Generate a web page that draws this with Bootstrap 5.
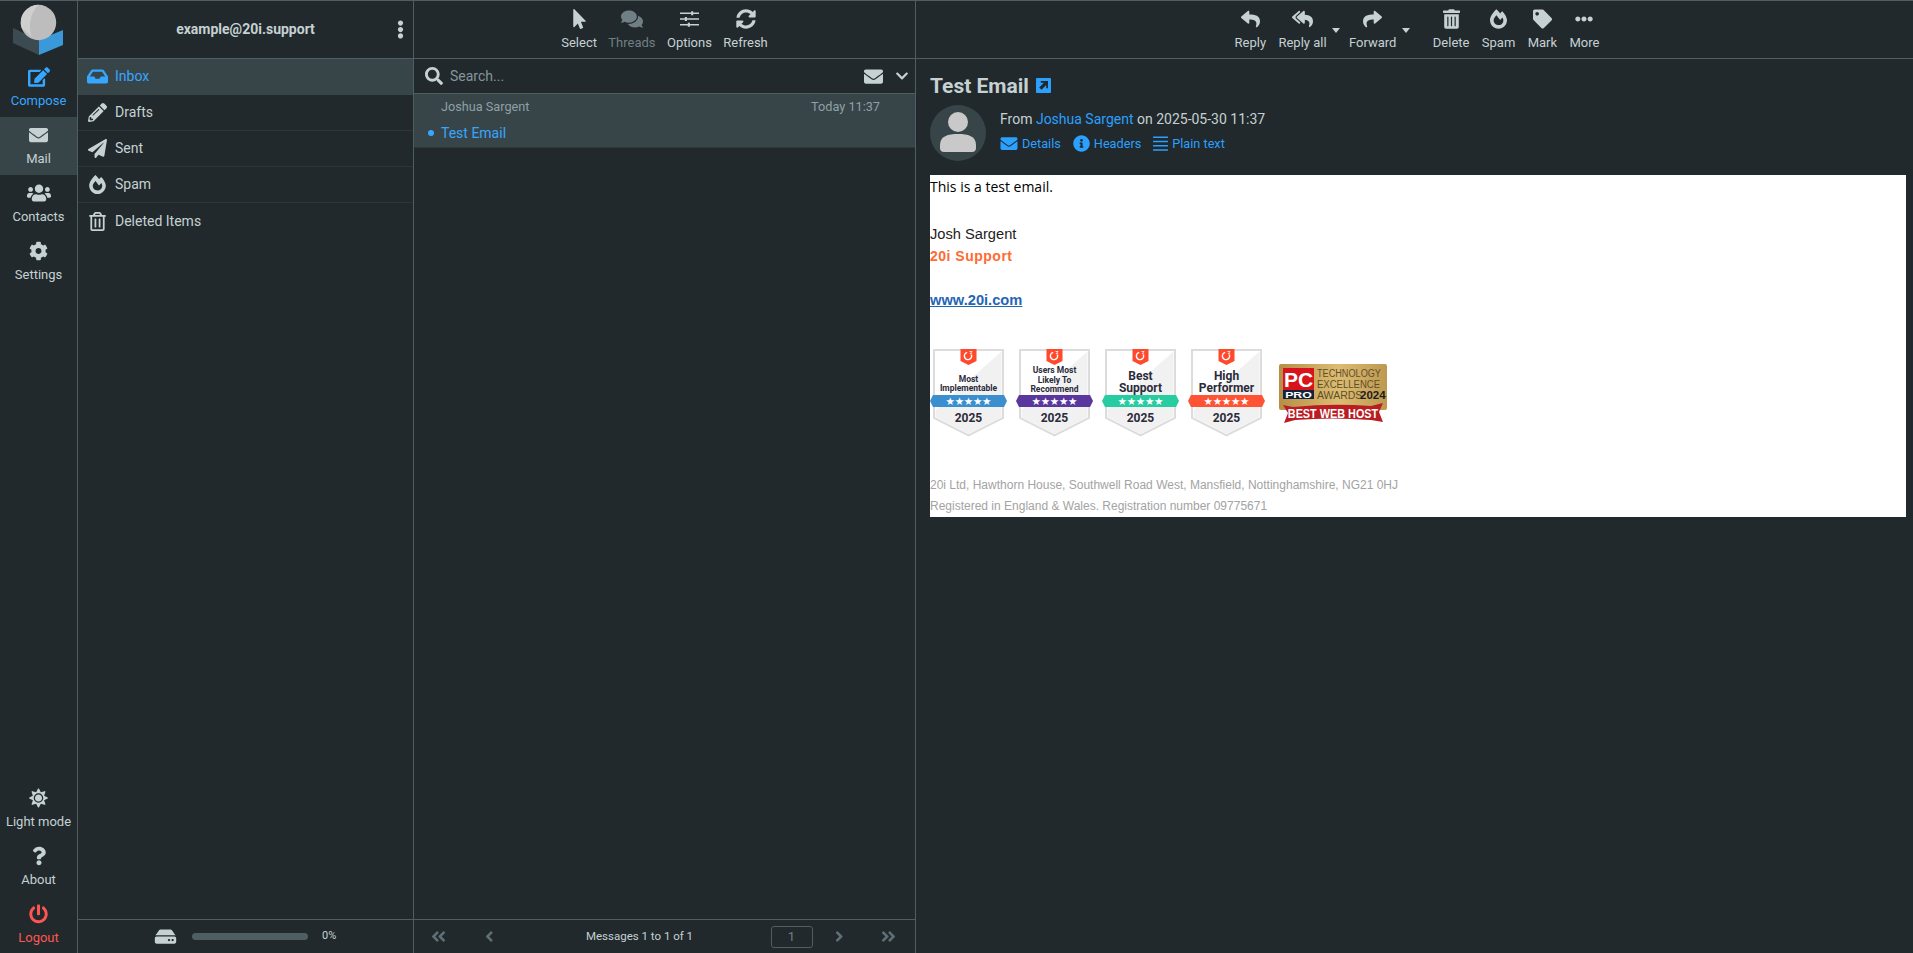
<!DOCTYPE html>
<html lang="en">
<head>
<meta charset="utf-8">
<title>Roundcube Webmail :: Test Email</title>
<link href="https://cdn.jsdelivr.net/npm/bootstrap@5.3.0/dist/css/bootstrap.min.css" rel="stylesheet">
<style>
html,body{height:100%;}
body{background:#21292c;color:#c5d1d3;font-family:Roboto,"Liberation Sans",sans-serif;font-size:14px;overflow:hidden;}
.shell{height:953px;border-top:1px solid #4f5e63;}
svg{fill:currentColor;display:block;flex:none;}
.rail{width:78px;border-right:1px solid #4f5e63;}
.logo-box{height:58px;}
.logo-svg{width:77px;height:58px;}
.rail-item{height:58px;padding-top:3px;font-size:13px;color:#c5d1d3;text-decoration:none;}
.rail-item.hi{padding-top:1px;}
.rail-item svg{height:20px;margin-bottom:4px;}
.rail-item.on{background:#374549;}
.rail-item.blue{color:#37a6ff;}
.rail-item.red{color:#ff5552;}
.w-compose{width:22px;}.w-mail{width:19px;}.w-users{width:24px;}.w-gear{width:19px;}.w-sun{width:19px;}.w-q{width:14px;}.w-power{width:19px;}
.folders{width:336px;border-right:1px solid #4f5e63;}
.list-col{width:502px;border-right:1px solid #4f5e63;}
.headbar{height:58px;border-bottom:1px solid #4f5e63;flex:none;}
.acct{font-weight:700;font-size:14px;position:relative;}
.dots{position:absolute;right:9px;top:19px;width:7px;height:19px;}
.fold{height:36px;padding:0 0 0 9px;border:0;border-bottom:1px solid #2d373b;background:transparent;color:#c5d1d3;font-size:14px;gap:7px;}
.fold.on{background:#374549;color:#37a6ff;border-bottom-color:#374549;}
.fold .fi{width:21px;height:19px;}
.quota{height:34px;border-top:1px solid #4f5e63;font-size:11px;padding-left:76px;}
.hdd{width:23px;height:19px;margin-right:15px;}
.bar-track{width:116px;height:7px;border-radius:4px;background:#4f5e63;margin-right:14px;}
.tool{padding:0 5.7px;font-size:13px;color:#c5d1d3;line-height:16px;white-space:nowrap;}
.tool svg{height:20px;margin-bottom:6px;}
.tool.off{color:#6f7f84;}
.msgbar{padding-left:5px;}
.msgbar .tool{padding:0 6.2px;}
.tw-sel{width:13px;}.tw-com{width:22px;}.tw-opt{width:19px;}.tw-ref{width:20px;}
.tw-rep{width:19px;}.tw-all{width:21px;}.tw-del{width:17px;}.tw-spam{width:17px;}.tw-tag{width:19px;}.tw-more{width:18px;}
.caret-a,.caret-b{position:relative;}
.caret-a{margin-right:10px;}
.caret-b{margin-right:24px;}
.caret-a::after,.caret-b::after{content:"";position:absolute;right:-7px;top:19px;border-left:4.5px solid transparent;border-right:4.5px solid transparent;border-top:5px solid #c5d1d3;}
.search{height:35px;border-bottom:1px solid #4f5e63;padding:0 6px 0 11px;flex:none;}
.search .mag{width:18px;height:18px;margin-right:7px;}
.search span{color:#85969c;font-size:14px;}
.env{width:19px;height:19px;margin-right:12px;}
.chev{width:14px;height:14px;}
.msg{height:54px;background:#374549;border-bottom:1px solid #2d373b;flex:none;padding:0 35px 0 27px;position:relative;}
.msg-top{height:26px;font-size:12.7px;color:#8fa0a6;}
.msg-sub{height:26px;font-size:14px;color:#37a6ff;}
.dot{position:absolute;left:14px;top:36px;width:6px;height:6px;border-radius:50%;background:#37a6ff;}
.pager{height:34px;border-top:1px solid #4f5e63;flex:none;font-size:11.5px;padding:0 0 0 17px;}
.pg-i{color:#5f6f75;height:17px;}
.pg-d{width:15px;}.pg-s{width:8.500px;}
.pg-text{width:246px;margin-left:23px;text-align:center;}
.pg-input{width:42px;height:22px;margin-left:8px;border:1px solid #4f5e63;border-radius:3px;color:#6f7f84;line-height:20px;text-align:center;font-size:13px;}
.l1{margin-left:39px;}.r1{margin-left:22px;}.r2{margin-left:38px;}
.viewer{padding:0 7px 0 14px;}
.subj{font-size:21px;font-weight:700;line-height:24px;margin-top:10px;height:36px;padding-bottom:3px;gap:7px;}
.ext{width:15px;height:15px;color:#2ba0ff;}
.meta{height:56px;gap:14px;margin-bottom:14px;}
.avatar{width:56px;height:56px;}
.from{line-height:16px;margin-top:6px;font-size:14px;}
.from a,.lnks a{color:#2ba0ff;text-decoration:none;}
.lnks{margin-top:8px;font-size:12.7px;gap:12px;line-height:16px;}
.lnks a{gap:4px;}
.lnks svg{height:17px;}
.l-env{width:18px;}.l-inf{width:17px;}.l-bar{width:15px;}
.mail-body{background:#fff;color:#000;height:342px;font-family:"Liberation Sans",Arial,sans-serif;font-size:14.67px;line-height:22px;}
.m-line{height:22px;white-space:nowrap;}
.m-first{font-family:"Open Sans",sans-serif;font-size:14px;margin-top:0;padding-top:1px;height:26px;line-height:22px;}
.m-gap1{margin-top:22px;color:#222;}
.m-brand{color:#ff6a33;font-weight:700;font-size:14px;letter-spacing:.5px;}
.m-link{margin-top:22px;color:#1f66b5;font-weight:700;font-size:14.67px;text-decoration:underline;}
.badges{margin-top:38px;height:90px;}
.g2{width:86px;height:90px;}
.g2 text{font-family:Roboto,"Liberation Sans",sans-serif;font-weight:700;text-anchor:middle;fill:#2b2b3a;}
.g2 .st{fill:#fff;font-weight:400;font-family:"DejaVu Sans",sans-serif;font-size:10.500px;}
.g2 .yr{font-size:12px;}
.g2 .big{font-size:12px;}
.g2 .sm{font-size:8.500px;}
.pcpro{width:110px;height:60px;margin:15px 0 0 5px;}
.pcpro text{font-family:"Liberation Sans",sans-serif;}
.legal{color:#a3a3a3;font-size:12px;line-height:21px;}
.legal-top{margin-top:36px;}
.symbols{width:0;height:0;position:absolute;}
</style>
</head>
<body>
<svg class="symbols" aria-hidden="true">
<symbol id="mail" viewBox="0 0 512 512"><path d="M502.3 190.8c3.9-3.1 9.7-.2 9.7 4.7V400c0 26.5-21.5 48-48 48H48c-26.5 0-48-21.5-48-48V195.6c0-5 5.7-7.8 9.7-4.7 22.4 17.4 52.1 39.5 154.1 113.6 21.1 15.4 56.7 47.8 92.2 47.6 35.7.3 72-32.8 92.3-47.6 102-74.1 131.6-96.3 154-113.7zM256 320c23.2.4 56.6-29.2 73.4-41.4 132.7-96.3 142.8-104.7 173.4-128.7 5.8-4.5 9.2-11.5 9.2-18.9v-19c0-26.5-21.5-48-48-48H48C21.5 64 0 85.5 0 112v19c0 7.4 3.4 14.3 9.2 18.9 30.6 23.9 40.7 32.4 173.4 128.7 16.8 12.2 50.2 41.8 73.4 41.4z"/></symbol>
<symbol id="edit" viewBox="0 0 576 512"><path d="M402.6 83.2l90.2 90.2c3.8 3.8 3.8 10 0 13.8L274.4 405.6l-92.8 10.3c-12.4 1.4-22.9-9.1-21.5-21.5l10.3-92.8L388.8 83.2c3.8-3.8 10-3.8 13.8 0zm162-22.9l-48.8-48.8c-15.2-15.2-39.9-15.2-55.2 0l-35.4 35.4c-3.8 3.8-3.8 10 0 13.8l90.2 90.2c3.8 3.8 10 3.8 13.8 0l35.4-35.4c15.2-15.3 15.2-40 0-55.2zM384 346.2V448H64V128h229.8c3.2 0 6.2-1.3 8.5-3.5l40-40c7.6-7.6 2.2-20.5-8.5-20.5H48C21.5 64 0 85.5 0 112v352c0 26.5 21.5 48 48 48h352c26.5 0 48-21.5 48-48V306.2c0-10.7-12.9-16-20.5-8.5l-40 40c-2.2 2.3-3.5 5.3-3.5 8.5z"/></symbol>
<symbol id="users" viewBox="0 0 640 512"><path d="M96 224c35.3 0 64-28.7 64-64s-28.7-64-64-64-64 28.7-64 64 28.7 64 64 64zm448 0c35.3 0 64-28.7 64-64s-28.7-64-64-64-64 28.7-64 64 28.7 64 64 64zm32 32h-64c-17.6 0-33.5 7.1-45.1 18.6 40.3 22.1 68.9 62 75.1 109.4h66c17.7 0 32-14.3 32-32v-32c0-35.3-28.7-64-64-64zm-256 0c61.9 0 112-50.1 112-112S381.9 32 320 32 208 82.1 208 144s50.1 112 112 112zm76.8 32h-8.3c-20.8 10-43.9 16-68.5 16s-47.6-6-68.5-16h-8.3C179.6 288 128 339.6 128 403.2V432c0 26.5 21.5 48 48 48h288c26.5 0 48-21.5 48-48v-28.8c0-63.6-51.6-115.2-115.2-115.2zm-223.7-13.4C161.5 263.1 145.6 256 128 256H64c-35.3 0-64 28.7-64 64v32c0 17.7 14.3 32 32 32h65.9c6.3-47.4 34.9-87.3 75.2-109.4z"/></symbol>
<symbol id="cog" viewBox="0 0 512 512"><path d="M487.4 315.7l-42.6-24.6c4.3-23.2 4.3-47 0-70.2l42.6-24.6c4.9-2.8 7.1-8.6 5.5-14-11.1-35.6-30-67.8-54.7-94.6-3.8-4.1-10-5.1-14.8-2.3L380.8 110c-17.9-15.4-38.5-27.3-60.8-35.1V25.8c0-5.6-3.9-10.5-9.4-11.7-36.7-8.2-74.3-7.8-109.2 0-5.5 1.2-9.4 6.1-9.4 11.7V75c-22.2 7.9-42.8 19.8-60.8 35.1L88.7 85.5c-4.9-2.8-11-1.9-14.8 2.3-24.7 26.7-43.6 58.9-54.7 94.6-1.7 5.4.6 11.2 5.5 14L67.3 221c-4.3 23.2-4.3 47 0 70.2l-42.6 24.6c-4.9 2.8-7.1 8.6-5.5 14 11.1 35.6 30 67.8 54.7 94.6 3.8 4.1 10 5.1 14.8 2.3l42.6-24.6c17.9 15.4 38.5 27.3 60.8 35.1v49.2c0 5.6 3.9 10.5 9.4 11.7 36.7 8.2 74.3 7.8 109.2 0 5.5-1.2 9.4-6.1 9.4-11.7v-49.2c22.2-7.9 42.8-19.8 60.8-35.1l42.6 24.6c4.9 2.8 11 1.9 14.8-2.3 24.7-26.7 43.6-58.9 54.7-94.6 1.5-5.5-.7-11.3-5.6-14.1zM256 336c-44.1 0-80-35.9-80-80s35.9-80 80-80 80 35.9 80 80-35.9 80-80 80z"/></symbol>
<symbol id="sun" viewBox="0 0 512 512"><path d="M256 160c-52.9 0-96 43.1-96 96s43.1 96 96 96 96-43.1 96-96-43.1-96-96-96zm246.4 80.5l-94.7-47.3 33.5-100.4c4.5-13.6-8.4-26.5-21.9-21.9l-100.4 33.5-47.4-94.8c-6.4-12.8-24.6-12.8-31 0l-47.3 94.7L92.7 70.8c-13.6-4.5-26.5 8.4-21.9 21.9l33.5 100.4-94.7 47.4c-12.8 6.4-12.8 24.6 0 31l94.7 47.3-33.5 100.5c-4.5 13.6 8.4 26.5 21.9 21.9l100.4-33.5 47.3 94.7c6.4 12.8 24.6 12.8 31 0l47.3-94.7 100.4 33.5c13.6 4.5 26.5-8.4 21.9-21.9l-33.5-100.4 94.7-47.3c13-6.5 13-24.7.2-31.1zm-155.9 106c-49.9 49.9-131.1 49.9-181 0-49.9-49.9-49.9-131.1 0-181 49.9-49.9 131.1-49.9 181 0 49.9 49.9 49.9 131.1 0 181z"/></symbol>
<symbol id="quest" viewBox="0 0 384 512"><path d="M202.021 0C122.202 0 70.503 32.703 29.914 91.026c-7.363 10.58-5.093 25.086 5.178 32.874l43.138 32.709c10.373 7.865 25.132 6.026 33.253-4.148 25.049-31.381 43.63-49.449 82.757-49.449 30.764 0 68.816 19.799 68.816 49.631 0 22.552-18.617 34.134-48.993 51.164-35.423 19.86-82.299 44.576-82.299 106.405V320c0 13.255 10.745 24 24 24h72.471c13.255 0 24-10.745 24-24v-5.773c0-42.86 125.268-44.645 125.268-160.627C377.504 66.256 286.902 0 202.021 0zM192 373.459c-38.196 0-69.271 31.075-69.271 69.271 0 38.195 31.075 69.27 69.271 69.27s69.271-31.075 69.271-69.271-31.075-69.27-69.271-69.27z"/></symbol>
<symbol id="power" viewBox="0 0 512 512"><path d="M400 54.1c63 45 104 118.6 104 201.9 0 136.8-110.8 247.7-247.5 248C120 504.3 8.2 393 8 256.4 7.9 173.1 48.9 99.3 111.8 54.2c11.7-8.3 28-4.8 35 7.7L162.6 90c5.9 10.5 3.1 23.8-6.6 31-41.5 30.8-68 79.6-68 134.9-.1 92.3 74.5 168.1 168 168.1 91.6 0 168.6-74.2 168-169.1-.3-51.8-24.7-101.8-68.1-134-9.7-7.2-12.4-20.5-6.5-30.9l15.8-28.1c7-12.4 23.2-16.1 34.8-7.8zM296 264V24c0-13.3-10.7-24-24-24h-32c-13.3 0-24 10.7-24 24v240c0 13.3 10.7 24 24 24h32c13.3 0 24-10.7 24-24z"/></symbol>
<symbol id="inbox" viewBox="0 0 576 512"><path d="M567.938 243.908L462.25 85.374A48.003 48.003 0 0 0 422.311 64H153.689a48 48 0 0 0-39.938 21.374L8.062 243.908A47.994 47.994 0 0 0 0 270.533V400c0 26.51 21.49 48 48 48h480c26.51 0 48-21.49 48-48V270.533a47.994 47.994 0 0 0-8.062-26.625zM162.252 128h251.497l85.333 128H376l-32 64H232l-32-64H76.918l85.334-128z"/></symbol>
<symbol id="pencil" viewBox="0 0 512 512"><path d="M497.9 142.1l-46.1 46.1c-4.7 4.7-12.3 4.7-17 0l-111-111c-4.7-4.7-4.7-12.3 0-17l46.1-46.1c18.7-18.7 49.1-18.7 67.9 0l60.1 60.1c18.8 18.7 18.8 49.1 0 67.9zM284.2 99.8L21.6 362.4.4 483.9c-2.9 16.4 11.4 30.6 27.8 27.8l121.5-21.3 262.6-262.6c4.7-4.7 4.7-12.3 0-17l-111-111c-4.8-4.7-12.4-4.7-17.1 0zM124.1 339.9c-5.5-5.5-5.5-14.3 0-19.8l154-154c5.5-5.5 14.3-5.5 19.8 0s5.5 14.3 0 19.8l-154 154c-5.5 5.5-14.3 5.5-19.8 0zM88 424h48v36.3l-64.5 11.3-31.1-31.1L51.7 376H88v48z"/></symbol>
<symbol id="plane" viewBox="0 0 512 512"><path d="M476 3.2L12.5 270.6c-18.1 10.4-15.8 35.6 2.2 43.2L121 358.4l287.3-253.2c5.5-4.9 13.3 2.6 8.6 8.3L176 407v80.5c0 23.6 28.5 32.9 42.5 15.8L282 426l124.6 52.2c14.2 6 30.4-2.9 33-18.2l72-432C515 7.8 493.3-6.8 476 3.2z"/></symbol>
<symbol id="fire" viewBox="0 0 448 512"><path d="M323.56 51.2c-20.8 19.3-39.58 39.59-56.22 59.97C240.08 73.62 206.28 35.53 168 0 69.74 91.17 0 209.96 0 281.6 0 408.85 100.29 512 224 512s224-103.15 224-230.4c0-53.27-51.98-163.14-124.44-230.4zm-19.47 340.65C282.43 407.01 255.72 416 226.86 416 154.71 416 96 368.26 96 290.75c0-38.61 24.31-72.63 72.79-130.75 6.93 7.98 98.83 125.34 98.83 125.34l58.63-66.88c4.14 6.85 7.91 13.55 11.27 19.97 27.35 52.19 15.81 118.97-33.43 153.42z"/></symbol>
<symbol id="trasho" viewBox="0 0 448 512"><path d="M268 416h24a12 12 0 0 0 12-12V188a12 12 0 0 0-12-12h-24a12 12 0 0 0-12 12v216a12 12 0 0 0 12 12zM432 80h-82.41l-34-56.7A48 48 0 0 0 274.41 0H173.59a48 48 0 0 0-41.16 23.3L98.41 80H16A16 16 0 0 0 0 96v16a16 16 0 0 0 16 16h16v336a48 48 0 0 0 48 48h288a48 48 0 0 0 48-48V128h16a16 16 0 0 0 16-16V96a16 16 0 0 0-16-16zM171.84 50.91A6 6 0 0 1 177 48h94a6 6 0 0 1 5.15 2.91L293.61 80H154.39zM368 464H80V128h288zm-212-48h24a12 12 0 0 0 12-12V188a12 12 0 0 0-12-12h-24a12 12 0 0 0-12 12v216a12 12 0 0 0 12 12z"/></symbol>
<symbol id="trash" viewBox="0 0 448 512"><path d="M32 464a48 48 0 0 0 48 48h288a48 48 0 0 0 48-48V128H32zm272-256a16 16 0 0 1 32 0v224a16 16 0 0 1-32 0zm-96 0a16 16 0 0 1 32 0v224a16 16 0 0 1-32 0zm-96 0a16 16 0 0 1 32 0v224a16 16 0 0 1-32 0zM432 32H312l-9.4-18.7A24 24 0 0 0 281.1 0H166.8a23.72 23.72 0 0 0-21.4 13.3L136 32H16A16 16 0 0 0 0 48v32a16 16 0 0 0 16 16h416a16 16 0 0 0 16-16V48a16 16 0 0 0-16-16z"/></symbol>
<symbol id="vdots" viewBox="0 0 192 512"><path d="M96 184c39.8 0 72 32.2 72 72s-32.2 72-72 72-72-32.2-72-72 32.2-72 72-72zM24 80c0 39.8 32.2 72 72 72s72-32.2 72-72S135.8 8 96 8 24 40.2 24 80zm0 352c0 39.8 32.2 72 72 72s72-32.2 72-72-32.2-72-72-72-72 32.2-72 72z"/></symbol>
<symbol id="hdots" viewBox="0 0 512 512"><path d="M328 256c0 39.8-32.2 72-72 72s-72-32.2-72-72 32.2-72 72-72 72 32.2 72 72zm104-72c-39.8 0-72 32.2-72 72s32.2 72 72 72 72-32.2 72-72-32.2-72-72-72zm-352 0c-39.8 0-72 32.2-72 72s32.2 72 72 72 72-32.2 72-72-32.2-72-72-72z"/></symbol>
<symbol id="pointer" viewBox="0 0 320 512"><path d="M302.189 329.126H196.105l55.831 135.993c3.889 9.428-.555 19.999-9.444 23.999l-49.165 21.427c-9.165 4-19.443-.571-23.332-9.714l-53.053-129.136-86.664 89.138C18.729 472.71 0 463.554 0 447.977V18.299C0 1.899 19.921-6.096 30.277 5.443l284.412 292.542c11.472 11.179 3.007 31.141-12.5 31.141z"/></symbol>
<symbol id="comments" viewBox="0 0 576 512"><path d="M416 192c0-88.4-93.1-160-208-160S0 103.6 0 192c0 34.3 14.1 65.9 38 92-13.4 30.2-35.5 54.2-35.8 54.5-2.2 2.3-2.8 5.7-1.5 8.7S4.8 352 8 352c36.6 0 66.9-12.3 88.7-25 32.2 15.7 70.3 25 111.3 25 114.9 0 208-71.6 208-160zm122 220c23.9-26 38-57.7 38-92 0-66.9-53.5-124.2-129.3-148.1.9 6.6 1.3 13.3 1.3 20.1 0 105.9-107.7 192-240 192-10.8 0-21.3-.8-31.7-1.9C207.8 439.6 281.8 480 368 480c41 0 79.1-9.2 111.3-25 21.8 12.7 52.1 25 88.7 25 3.2 0 6.1-1.9 7.3-4.8 1.3-2.9.7-6.3-1.5-8.7-.3-.3-22.4-24.2-35.8-54.5z"/></symbol>
<symbol id="sliders" viewBox="0 0 512 512"><path d="M0 78h512v44H0zM0 234h512v44H0zM0 390h512v44H0zM300 44h56v112h-56zM130 200h56v112h-56zM210 356h56v112h-56z"/></symbol>
<symbol id="sync" viewBox="0 0 512 512"><path d="M370.72 133.28C339.458 104.008 298.888 87.962 255.848 88c-77.458.068-144.328 53.178-162.791 126.85-1.344 5.363-6.122 9.15-11.651 9.15H24.103c-7.498 0-13.194-6.807-11.807-14.176C33.933 94.924 134.813 8 256 8c66.448 0 126.791 26.136 171.315 68.685L463.03 40.97C478.149 25.851 504 36.559 504 57.941V192c0 13.255-10.745 24-24 24H345.941c-21.382 0-32.09-25.851-16.971-40.971l41.75-41.749zM32 296h134.059c21.382 0 32.09 25.851 16.971 40.971l-41.75 41.75c31.262 29.273 71.835 45.319 114.876 45.28 77.418-.07 144.315-53.144 162.787-126.849 1.344-5.363 6.122-9.15 11.651-9.15h57.304c7.498 0 13.194 6.807 11.807 14.176C478.067 417.076 377.187 504 256 504c-66.448 0-126.791-26.136-171.315-68.685L48.97 471.03C33.851 486.149 8 475.441 8 454.059V320c0-13.255 10.745-24 24-24z"/></symbol>
<symbol id="reply" viewBox="0 0 512 512"><path d="M8.309 189.836L184.313 37.851C199.719 24.546 224 35.347 224 56.015v80.053c160.629 1.839 288 34.032 288 186.258 0 61.441-39.581 122.309-83.333 154.132-13.653 9.931-33.111-2.533-28.077-18.631 45.344-145.012-21.507-183.51-176.59-185.742V360c0 20.7-24.3 31.453-39.687 18.164l-176.004-152c-11.071-9.562-11.086-26.753 0-36.328z"/></symbol>
<symbol id="replyall" viewBox="0 0 576 512"><path d="M136.309 189.836L312.313 37.851C327.72 24.546 352 35.348 352 56.015v82.763c129.182 10.231 224 52.212 224 183.548 0 61.441-39.582 122.309-83.333 154.132-13.653 9.931-33.111-2.533-28.077-18.631 38.512-123.162-3.922-169.482-112.59-182.015v84.175c0 20.701-24.3 31.453-39.687 18.164L136.309 226.164c-11.071-9.561-11.086-26.753 0-36.328zm-128 36.328L184.313 378.15C199.7 391.439 224 380.687 224 359.986v-15.818l-108.606-93.785A55.96 55.96 0 0 1 96 207.998a55.953 55.953 0 0 1 19.393-42.38L224 71.832V56.015c0-20.667-24.28-31.469-39.687-18.164L8.309 189.836c-11.086 9.575-11.071 26.767 0 36.328z"/></symbol>
<symbol id="share" viewBox="0 0 512 512"><path d="M503.691 189.836L327.687 37.851C312.281 24.546 288 35.347 288 56.015v80.053C127.371 137.907 0 170.1 0 322.326c0 61.441 39.581 122.309 83.333 154.132 13.653 9.931 33.111-2.533 28.077-18.631C66.066 312.814 132.917 274.316 288 272.085V360c0 20.7 24.3 31.453 39.687 18.164l176.004-152c11.071-9.562 11.086-26.753 0-36.328z"/></symbol>
<symbol id="tag" viewBox="0 0 512 512"><path d="M0 252.118V48C0 21.49 21.49 0 48 0h204.118a48 48 0 0 1 33.941 14.059l211.882 211.882c18.745 18.745 18.745 49.137 0 67.882L293.823 497.941c-18.745 18.745-49.137 18.745-67.882 0L14.059 286.059A48 48 0 0 1 0 252.118zM112 64c-26.51 0-48 21.49-48 48s21.49 48 48 48 48-21.49 48-48-21.49-48-48-48z"/></symbol>
<symbol id="search" viewBox="0 0 512 512"><path d="M505 442.7L405.3 343c-4.5-4.5-10.6-7-17-7H372c27.6-35.3 44-79.7 44-128C416 93.1 322.9 0 208 0S0 93.1 0 208s93.1 208 208 208c48.3 0 92.7-16.4 128-44v16.3c0 6.4 2.5 12.5 7 17l99.7 99.7c9.4 9.4 24.6 9.4 33.9 0l28.3-28.3c9.4-9.4 9.4-24.6.1-34zM208 336c-70.7 0-128-57.2-128-128 0-70.7 57.2-128 128-128 70.7 0 128 57.2 128 128 0 70.7-57.2 128-128 128z"/></symbol>
<symbol id="chev" viewBox="0 0 448 512"><path d="M207.029 381.476L12.686 187.132c-9.373-9.373-9.373-24.569 0-33.941l22.667-22.667c9.357-9.357 24.522-9.375 33.901-.04L224 284.505l154.745-154.021c9.379-9.335 24.544-9.317 33.901.04l22.667 22.667c9.373 9.373 9.373 24.569 0 33.941L240.971 381.476c-9.373 9.372-24.569 9.372-33.942 0z"/></symbol>
<symbol id="dleft" viewBox="0 0 448 512"><path d="M223.7 239l136-136c9.4-9.4 24.6-9.4 33.9 0l22.6 22.6c9.4 9.4 9.4 24.6 0 33.9L319.9 256l96.4 96.4c9.4 9.4 9.4 24.6 0 33.9L393.7 409c-9.4 9.4-24.6 9.4-33.9 0l-136-136c-9.5-9.4-9.5-24.6-.1-34zm-192 34l136 136c9.4 9.4 24.6 9.4 33.9 0l22.6-22.6c9.4-9.4 9.4-24.6 0-33.9L127.9 256l96.4-96.4c9.4-9.4 9.4-24.6 0-33.9L201.7 103c-9.4-9.4-24.6-9.4-33.9 0l-136 136c-9.5 9.4-9.5 24.6-.1 34z"/></symbol>
<symbol id="left" viewBox="0 0 256 512"><path d="M31.7 239l136-136c9.4-9.4 24.6-9.4 33.9 0l22.6 22.6c9.4 9.4 9.4 24.6 0 33.9L127.9 256l96.4 96.4c9.4 9.4 9.4 24.6 0 33.9L201.7 409c-9.4 9.4-24.6 9.4-33.9 0l-136-136c-9.5-9.4-9.5-24.6-.1-34z"/></symbol>
<symbol id="right" viewBox="0 0 256 512"><path d="M224.3 273l-136 136c-9.4 9.4-24.6 9.4-33.9 0l-22.6-22.6c-9.4-9.4-9.4-24.6 0-33.9l96.4-96.4-96.4-96.4c-9.4-9.4-9.4-24.6 0-33.9L54.3 103c9.4-9.4 24.6-9.4 33.9 0l136 136c9.5 9.4 9.5 24.6.1 34z"/></symbol>
<symbol id="dright" viewBox="0 0 448 512"><path d="M224.3 273l-136 136c-9.4 9.4-24.6 9.4-33.9 0l-22.6-22.6c-9.4-9.4-9.4-24.6 0-33.9l96.4-96.4-96.4-96.4c-9.4-9.4-9.4-24.6 0-33.9L54.3 103c9.4-9.4 24.6-9.4 33.9 0l136 136c9.5 9.4 9.5 24.6.1 34zm192-34l-136-136c-9.4-9.4-24.6-9.4-33.9 0l-22.6 22.6c-9.4 9.4-9.4 24.6 0 33.9l96.4 96.4-96.4 96.4c-9.4 9.4-9.4 24.6 0 33.9l22.6 22.6c9.4 9.4 24.6 9.4 33.9 0l136-136c9.4-9.2 9.4-24.4 0-33.8z"/></symbol>
<symbol id="info" viewBox="0 0 512 512"><path d="M256 8C119.043 8 8 119.083 8 256c0 136.997 111.043 248 248 248s248-111.003 248-248C504 119.083 392.957 8 256 8zm0 110c23.196 0 42 18.804 42 42s-18.804 42-42 42-42-18.804-42-42 18.804-42 42-42zm56 254c0 6.627-5.373 12-12 12h-88c-6.627 0-12-5.373-12-12v-24c0-6.627 5.373-12 12-12h12v-64h-12c-6.627 0-12-5.373-12-12v-24c0-6.627 5.373-12 12-12h64c6.627 0 12 5.373 12 12v100h12c6.627 0 12 5.373 12 12v24z"/></symbol>
<symbol id="lines" viewBox="0 0 448 512"><path d="M0 44h448v50H0zM0 172h448v50H0zM0 300h448v50H0zM0 428h448v50H0z"/></symbol>
<symbol id="ext" viewBox="0 0 448 448"><path d="M32 0h384c18 0 32 14 32 32v384c0 18-14 32-32 32H32c-18 0-32-14-32-32V32C0 14 14 0 32 0zm110 90v52h94L96 282l70 70 140-140v94h52V90z"/></symbol>
<symbol id="hdd" viewBox="0 0 576 512"><path d="M576 304v96c0 26.51-21.49 48-48 48H48c-26.51 0-48-21.49-48-48v-96c0-26.51 21.49-48 48-48h480c26.51 0 48 21.49 48 48zm-48-80a79.557 79.557 0 0 1 30.777 6.165L462.25 85.374A48.003 48.003 0 0 0 422.311 64H153.689a48 48 0 0 0-39.938 21.374L17.223 230.165A79.557 79.557 0 0 1 48 224h480zm-48 96c-17.673 0-32 14.327-32 32s14.327 32 32 32 32-14.327 32-32-14.327-32-32-32zm-96 0c-17.673 0-32 14.327-32 32s14.327 32 32 32 32-14.327 32-32-14.327-32-32-32z"/></symbol>
<symbol id="badge" viewBox="0 0 86 90">
  <path d="M4 1H73V69L38.500 86.500 4 69Z" fill="#fff" stroke="#dcdcdc" stroke-width="2"/>
  <path d="M71.500 2.500V68L38.500 85 5.500 68V61Z" fill="#f1f1f1"/>
  <path d="M30.500 0H46.500V12L38.500 16 30.500 12Z" fill="#ff492c"/>
  <circle cx="38" cy="7" r="3.600" fill="none" stroke="#fff" stroke-width="1.500" stroke-dasharray="17 6" transform="rotate(-20 38 7)"/>
  <path d="M39.500 2.500h2.500l-1.800 2.300h2" fill="none" stroke="#fff" stroke-width=".8"/>
</symbol>
</svg>

<div class="shell d-flex">
  <nav class="rail d-flex flex-column flex-shrink-0">
    <div class="logo-box">
      <svg class="logo-svg" viewBox="0 0 77 58">
        <path d="M13 27 39 39V54L13 42Z" fill="#3c4b52"/>
        <path d="M39 39 63 29V44L39 54Z" fill="#3a9ad9"/>
        <circle cx="38.500" cy="21.500" r="17.700" fill="#bdbdbd"/>
        <path d="M38.500 3.800a17.700 17.700 0 0 0-17 23l10 9c-3-10-2-23 7-32z" fill="#cfcfcf"/>
      </svg>
    </div>
    <a class="rail-item hi blue d-flex flex-column align-items-center justify-content-center" href="#"><svg class="w-compose"><use href="#edit"/></svg>Compose</a>
    <a class="rail-item hi on d-flex flex-column align-items-center justify-content-center" href="#"><svg class="w-mail"><use href="#mail"/></svg>Mail</a>
    <a class="rail-item hi d-flex flex-column align-items-center justify-content-center" href="#"><svg class="w-users"><use href="#users"/></svg>Contacts</a>
    <a class="rail-item hi d-flex flex-column align-items-center justify-content-center" href="#"><svg class="w-gear"><use href="#cog"/></svg>Settings</a>
    <div class="flex-grow-1"></div>
    <a class="rail-item d-flex flex-column align-items-center justify-content-center" href="#"><svg class="w-sun"><use href="#sun"/></svg>Light mode</a>
    <a class="rail-item d-flex flex-column align-items-center justify-content-center" href="#"><svg class="w-q"><use href="#quest"/></svg>About</a>
    <a class="rail-item red d-flex flex-column align-items-center justify-content-center" href="#"><svg class="w-power"><use href="#power"/></svg>Logout</a>
  </nav>

  <section class="folders d-flex flex-column flex-shrink-0">
    <div class="headbar acct d-flex align-items-center justify-content-center">example@20i.support<svg class="dots"><use href="#vdots"/></svg></div>
    <div class="list-group list-group-flush rounded-0 flex-grow-1">
      <a class="fold on list-group-item d-flex align-items-center" href="#"><svg class="fi"><use href="#inbox"/></svg>Inbox</a>
      <a class="fold list-group-item d-flex align-items-center" href="#"><svg class="fi"><use href="#pencil"/></svg>Drafts</a>
      <a class="fold list-group-item d-flex align-items-center" href="#"><svg class="fi"><use href="#plane"/></svg>Sent</a>
      <a class="fold list-group-item d-flex align-items-center" href="#"><svg class="fi"><use href="#fire"/></svg>Spam</a>
      <a class="fold list-group-item d-flex align-items-center" href="#"><svg class="fi"><use href="#trasho"/></svg>Deleted Items</a>
    </div>
    <div class="quota d-flex align-items-center">
      <svg class="hdd"><use href="#hdd"/></svg>
      <div class="bar-track"></div>
      <span>0%</span>
    </div>
  </section>

  <section class="list-col d-flex flex-column flex-shrink-0">
    <div class="headbar d-flex align-items-center justify-content-center">
      <div class="tool d-flex flex-column align-items-center"><svg class="tw-sel"><use href="#pointer"/></svg>Select</div>
      <div class="tool off d-flex flex-column align-items-center"><svg class="tw-com"><use href="#comments"/></svg>Threads</div>
      <div class="tool d-flex flex-column align-items-center"><svg class="tw-opt"><use href="#sliders"/></svg>Options</div>
      <div class="tool d-flex flex-column align-items-center"><svg class="tw-ref"><use href="#sync"/></svg>Refresh</div>
    </div>
    <div class="search d-flex align-items-center">
      <svg class="mag"><use href="#search"/></svg>
      <span class="flex-grow-1">Search...</span>
      <svg class="env"><use href="#mail"/></svg>
      <svg class="chev"><use href="#chev"/></svg>
    </div>
    <div class="msg">
      <div class="msg-top d-flex align-items-center justify-content-between"><span>Joshua Sargent</span><span>Today 11:37</span></div>
      <div class="msg-sub d-flex align-items-center">Test Email</div>
      <i class="dot"></i>
    </div>
    <div class="flex-grow-1"></div>
    <div class="pager d-flex align-items-center">
      <svg class="pg-i pg-d"><use href="#dleft"/></svg>
      <svg class="pg-i pg-s l1"><use href="#left"/></svg>
      <div class="pg-text">Messages 1 to 1 of 1</div>
      <div class="pg-input">1</div>
      <svg class="pg-i pg-s r1"><use href="#right"/></svg>
      <svg class="pg-i pg-d r2"><use href="#dright"/></svg>
    </div>
  </section>

  <main class="flex-grow-1 d-flex flex-column">
    <div class="headbar msgbar d-flex align-items-center justify-content-center">
      <div class="tool d-flex flex-column align-items-center"><svg class="tw-rep"><use href="#reply"/></svg>Reply</div>
      <div class="tool caret-a d-flex flex-column align-items-center"><svg class="tw-all"><use href="#replyall"/></svg>Reply all</div>
      <div class="tool caret-b d-flex flex-column align-items-center"><svg class="tw-rep"><use href="#share"/></svg>Forward</div>
      <div class="tool d-flex flex-column align-items-center"><svg class="tw-del"><use href="#trash"/></svg>Delete</div>
      <div class="tool d-flex flex-column align-items-center"><svg class="tw-spam"><use href="#fire"/></svg>Spam</div>
      <div class="tool d-flex flex-column align-items-center"><svg class="tw-tag"><use href="#tag"/></svg>Mark</div>
      <div class="tool d-flex flex-column align-items-center"><svg class="tw-more"><use href="#hdots"/></svg>More</div>
    </div>
    <div class="viewer flex-grow-1">
      <div class="subj d-flex align-items-center">Test Email <svg class="ext"><use href="#ext"/></svg></div>
      <div class="meta d-flex">
        <svg class="avatar" viewBox="0 0 56 56"><circle cx="28" cy="28" r="28" fill="#374549"/><circle cx="28" cy="17" r="10" fill="#c9c9c9"/><path d="M10 40c0-9 8-11 18-11s18 2 18 11v3c0 2-1 4-4 4H14c-3 0-4-2-4-4z" fill="#c9c9c9"/></svg>
        <div>
          <div class="from">From <a href="#">Joshua Sargent</a> on 2025-05-30 11:37</div>
          <div class="lnks d-flex">
            <a class="d-flex align-items-center" href="#"><svg class="l-env"><use href="#mail"/></svg>Details</a>
            <a class="d-flex align-items-center" href="#"><svg class="l-inf"><use href="#info"/></svg>Headers</a>
            <a class="d-flex align-items-center" href="#"><svg class="l-bar"><use href="#lines"/></svg>Plain text</a>
          </div>
        </div>
      </div>
      <article class="mail-body">
        <div class="m-line m-first">This is a test email.</div>
        <div class="m-line m-gap1">Josh Sargent</div>
        <div class="m-line m-brand">20i Support</div>
        <div class="m-line m-link">www.20i.com</div>
        <div class="badges d-flex">
          <svg class="g2" viewBox="0 0 86 90"><use href="#badge"/>
            <text class="sm" x="38.500" y="32.500">Most</text>
            <text class="sm" x="38.500" y="41.500">Implementable</text>
            <path d="M3 46H74L77 52 74 58H3L0 52Z" fill="#3b8fcf"/>
            <text class="st" x="38.500" y="56" textLength="46">★★★★★</text>
            <text class="yr" x="38.500" y="72.500">2025</text>
          </svg>
          <svg class="g2" viewBox="0 0 86 90"><use href="#badge"/>
            <text class="sm" x="38.500" y="24">Users Most</text>
            <text class="sm" x="38.500" y="33.500">Likely To</text>
            <text class="sm" x="38.500" y="42.800">Recommend</text>
            <path d="M3 46H74L77 52 74 58H3L0 52Z" fill="#5a379c"/>
            <text class="st" x="38.500" y="56" textLength="46">★★★★★</text>
            <text class="yr" x="38.500" y="72.500">2025</text>
          </svg>
          <svg class="g2" viewBox="0 0 86 90"><use href="#badge"/>
            <text class="big" x="38.500" y="30.500">Best</text>
            <text class="big" x="38.500" y="42.500">Support</text>
            <path d="M3 46H74L77 52 74 58H3L0 52Z" fill="#27cca1"/>
            <text class="st" x="38.500" y="56" textLength="46">★★★★★</text>
            <text class="yr" x="38.500" y="72.500">2025</text>
          </svg>
          <svg class="g2" viewBox="0 0 86 90"><use href="#badge"/>
            <text class="big" x="38.500" y="30.500">High</text>
            <text class="big" x="38.500" y="42.500">Performer</text>
            <path d="M3 46H74L77 52 74 58H3L0 52Z" fill="#ff5336"/>
            <text class="st" x="38.500" y="56" textLength="46">★★★★★</text>
            <text class="yr" x="38.500" y="72.500">2025</text>
          </svg>
          <svg class="pcpro" viewBox="0 0 110 60">
            <defs><linearGradient id="au" x1="0" x2="1"><stop offset="0" stop-color="#b68f45"/><stop offset=".55" stop-color="#dcbc72"/><stop offset="1" stop-color="#be9850"/></linearGradient></defs>
            <rect x="0" y="0" width="108" height="46" rx="2" fill="url(#au)"/>
            <rect x="4" y="4" width="31" height="22" fill="#d8131b"/>
            <rect x="4" y="26" width="31" height="9" fill="#14233c"/>
            <text x="19.500" y="22.500" font-size="21" font-weight="700" text-anchor="middle" fill="#fff">PC</text>
            <text transform="translate(19.500 34.300) scale(1.300 1)" font-size="9.500" font-weight="700" text-anchor="middle" fill="#fff">PRO</text>
            <text transform="translate(38 12.500) scale(.795 1)" font-size="11.500" fill="#5d4e2a">TECHNOLOGY</text>
            <text transform="translate(38 23.500) scale(.83 1)" font-size="11.500" fill="#5d4e2a">EXCELLENCE</text>
            <text transform="translate(38 34.500) scale(.915 1)" font-size="11.500" fill="#5d4e2a">AWARDS</text>
            <text x="81" y="34.500" font-size="11.500" font-weight="700" fill="#1c1c1c">2024</text>
            <path d="M4 41 9 49 5 59 16 56Q54 53 92 56L104 58 100 48 104 39 92 42Q54 39 14 43Z" fill="#b91c22"/>
            <text transform="translate(54 53.500) scale(.835 1)" font-size="13" font-weight="700" text-anchor="middle" fill="#fff">BEST WEB HOST</text>
          </svg>
        </div>
        <div class="legal legal-top">20i Ltd, Hawthorn House, Southwell Road West, Mansfield, Nottinghamshire, NG21 0HJ</div>
        <div class="legal">Registered in England &amp; Wales. Registration number 09775671</div>
      </article>
    </div>
  </main>
</div>
<script src="https://cdn.jsdelivr.net/npm/bootstrap@5.3.0/dist/js/bootstrap.bundle.min.js"></script>
</body>
</html>
